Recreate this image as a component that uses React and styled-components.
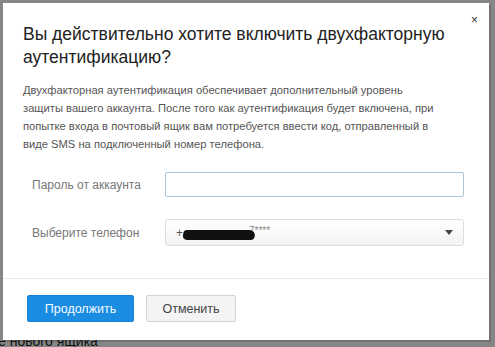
import React from 'react';
import styled, { createGlobalStyle } from 'styled-components';

const GlobalStyle = createGlobalStyle`
  html, body {
    margin: 0;
    padding: 0;
    background: #868686;
    font-family: "Liberation Sans", Arial, sans-serif;
  }
`

const Overlay = styled.div`
  width: 495px;
  height: 347px;
  overflow: hidden;
  background: #868686;
  padding: 3px 0 0 3px;
  box-sizing: border-box;
`

const Modal = styled.div`
  width: 486px;
  height: 337px;
  background: #fff;
  box-shadow: 2px 2px 0 #707070;
  display: flex;
  flex-direction: column;
  box-sizing: border-box;
`

const Header = styled.div`
  display: flex;
  align-items: flex-start;
  padding: 11px 11px 0 20px;
`

const Title = styled.h2`
  flex: 1;
  margin: 9px 0 0;
  font-weight: normal;
  font-size: 17.5px;
  line-height: 23px;
  color: #222;
`

const Close = styled.span`
  font-size: 12px;
  line-height: 12px;
  color: #333;
`

const Body = styled.div`
  padding: 0 14px 0 20px;
  flex: 1;
`

const Text = styled.p`
  margin: 12px 0 0;
  font-size: 11.2px;
  line-height: 18px;
  color: #555;
`

const Row = styled.div`
  display: flex;
  align-items: center;
  margin-top: ${p => p.$top}px;
  padding-left: 9px;
`

const Label = styled.label`
  width: 133px;
  font-size: 12px;
  color: #777;
`

const Input = styled.input`
  width: 299px;
  height: 25px;
  box-sizing: border-box;
  border: 1px solid #a9c6db;
  border-radius: 2px;
  outline: none;
  padding: 0 8px;
  font-family: inherit;
`

const Select = styled.div`
  width: 299px;
  height: 27px;
  box-sizing: border-box;
  border: 1px solid #ddd;
  border-radius: 3px;
  background: linear-gradient(#fff, #f3f3f3);
  display: flex;
  align-items: center;
  padding: 0 10px;
  font-size: 12px;
  color: #555;
`

const Blur = styled.span`
  display: inline-block;
  width: 72px;
  height: 10px;
  margin: 5px 0 0 0;
  background: #111;
  border-radius: 4px 9px 5px 7px;
  transform: skewX(-12deg);
`

const Stars = styled.span`
  font-size: 10px;
  color: #888;
  margin: -4px 0 0 -6px;
  flex: 1;
`

const Caret = styled.span`
  width: 0;
  height: 0;
  border-left: 4px solid transparent;
  border-right: 4px solid transparent;
  border-top: 5px solid #444;
`

const Footer = styled.div`
  border-top: 1px solid #e8e8e8;
  padding: 16px 0 18px 24px;
  display: flex;
  gap: 12px;
`

const Button = styled.button`
  width: ${p => p.$w}px;
  height: 27px;
  padding: 0;
  font-family: inherit;
  font-size: 12.5px;
  border-radius: 2px;
  border: 1px solid ${p => (p.$primary ? '#1681d6' : '#d3d3d3')};
  background: ${p => (p.$primary ? '#1a8de2' : '#f4f4f4')};
  color: ${p => (p.$primary ? '#f4f9ff' : '#444')};
`

const Behind = styled.div`
  height: 7px;
  overflow: hidden;
  margin-left: -5px;
`

const BehindText = styled.div`
  margin-top: -6px;
  font-size: 14px;
  line-height: 14px;
  color: #111;
`

export default function App() {
  return (
    <>
      <GlobalStyle />
      <Overlay>
        <Modal>
          <Header>
            <Title>Вы действительно хотите включить двухфакторную аутентификацию?</Title>
            <Close>×</Close>
          </Header>
          <Body>
            <Text>
              Двухфакторная аутентификация обеспечивает дополнительный уровень<br />
              защиты вашего аккаунта. После того как аутентификация будет включена, при<br />
              попытке входа в почтовый ящик вам потребуется ввести код, отправленный в<br />
              виде SMS на подключенный номер телефона.
            </Text>
            <Row $top={19}>
              <Label>Пароль от аккаунта</Label>
              <Input type="password" />
            </Row>
            <Row $top={22}>
              <Label>Выберите телефон</Label>
              <Select>
                +<Blur /><Stars>7****</Stars>
                <Caret />
              </Select>
            </Row>
          </Body>
          <Footer>
            <Button $primary $w={107}>Продолжить</Button>
            <Button $w={90}>Отменить</Button>
          </Footer>
        </Modal>
        <Behind>
          <BehindText>е нового ящика</BehindText>
        </Behind>
      </Overlay>
    </>
  );
}
